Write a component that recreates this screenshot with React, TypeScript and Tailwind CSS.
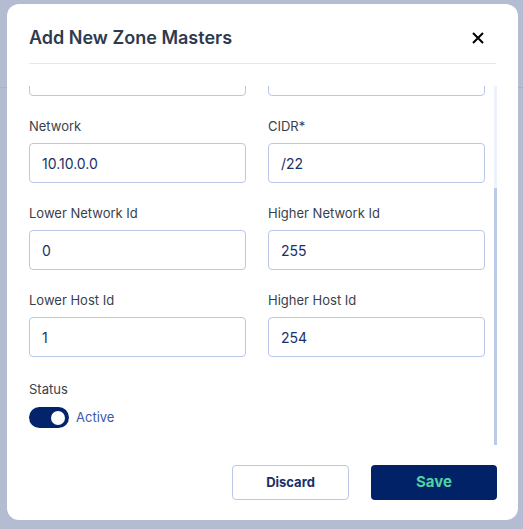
import React from "react";

type Field = { label: string; value: string; hideLabel?: boolean };

const rows: [Field, Field][] = [
  [
    { label: "Gateway", value: "", hideLabel: true },
    { label: "Description", value: "", hideLabel: true },
  ],
  [
    { label: "Network", value: "10.10.0.0" },
    { label: "CIDR*", value: "/22" },
  ],
  [
    { label: "Lower Network Id", value: "0" },
    { label: "Higher Network Id", value: "255" },
  ],
  [
    { label: "Lower Host Id", value: "1" },
    { label: "Higher Host Id", value: "254" },
  ],
];

const font = { fontFamily: "Inter, 'Noto Sans', sans-serif" };

function FormField({ label, value, hideLabel }: Field) {
  return (
    <div className="flex flex-col">
      <label className="h-5 text-[13px] leading-5 text-[#3a3f4b]">{hideLabel ? null : label}</label>
      <input
        readOnly
        aria-label={label}
        value={value}
        className="mt-[7px] h-10 w-full rounded-[4px] border border-[#bac7e6] bg-white px-3 text-[14px] text-[#1c2f66] outline-none"
      />
    </div>
  );
}

export default function App() {
  return (
    <div className="relative h-[529px] w-[523px] overflow-hidden bg-[#b3bcd1]" style={font}>
      {/* page behind the overlay */}
      <div className="h-[88px] border-b border-[#a6b0c6]" />

      <div className="absolute left-[7px] top-[4px] flex h-[516px] w-[511px] flex-col rounded-xl bg-white">
        {/* header */}
        <div className="mx-[22px] flex items-center justify-between border-b border-[#e3e7ef] pb-[11px] pt-[20px]">
          <h2 className="text-[18px] font-semibold leading-7 text-[#2e3a4f]">Add New Zone Masters</h2>
          <button className="mr-[8px] flex h-5 w-5 items-center justify-center text-black">
            <svg width="12" height="12" viewBox="0 0 12 12" fill="none" stroke="currentColor" strokeWidth="2">
              <path d="M1 1l10 10M11 1L1 11" />
            </svg>
          </button>
        </div>

        {/* scrolling body */}
        <div className="mt-[22px] flex h-[359px]">
          <div className="flex-1 overflow-hidden pl-[22px] pr-[9px]">
            <div className="mt-[-57px] flex flex-col gap-5">
              {rows.map(([a, b], i) => (
                <div key={i} className="grid grid-cols-2 gap-[22px]">
                  <FormField {...a} />
                  <FormField {...b} />
                </div>
              ))}
              <div className="mt-[2px] flex flex-col">
                <span className="h-5 text-[13px] leading-5 text-[#3a3f4b]">Status</span>
                <div className="mt-2 flex items-center gap-[7px]">
                  <div className="flex h-[21px] w-10 items-center justify-end rounded-full bg-[#03246a] pr-[4px]">
                    <div className="h-[14px] w-[14px] rounded-full bg-white" />
                  </div>
                  <span className="text-[13px] text-[#3b5aab]">Active</span>
                </div>
              </div>
            </div>
          </div>
          {/* scrollbar */}
          <div className="mr-[21px] flex w-[3px] flex-col bg-[#eef2fb]">
            <div className="mt-auto h-[257px] bg-[#bccae9]" />
          </div>
        </div>

        {/* footer */}
        <div className="mt-[20px] flex justify-end gap-[22px] pr-[21px]">
          <button className="h-[35px] w-[117px] rounded-[4px] border border-[#bac7e6] bg-white text-[13px] font-bold text-[#1c2f66]">
            Discard
          </button>
          <button className="h-[35px] w-[126px] rounded-[4px] bg-[#022268] text-[15px] font-bold text-[#4dd3a3]">
            Save
          </button>
        </div>
      </div>
    </div>
  );
}
